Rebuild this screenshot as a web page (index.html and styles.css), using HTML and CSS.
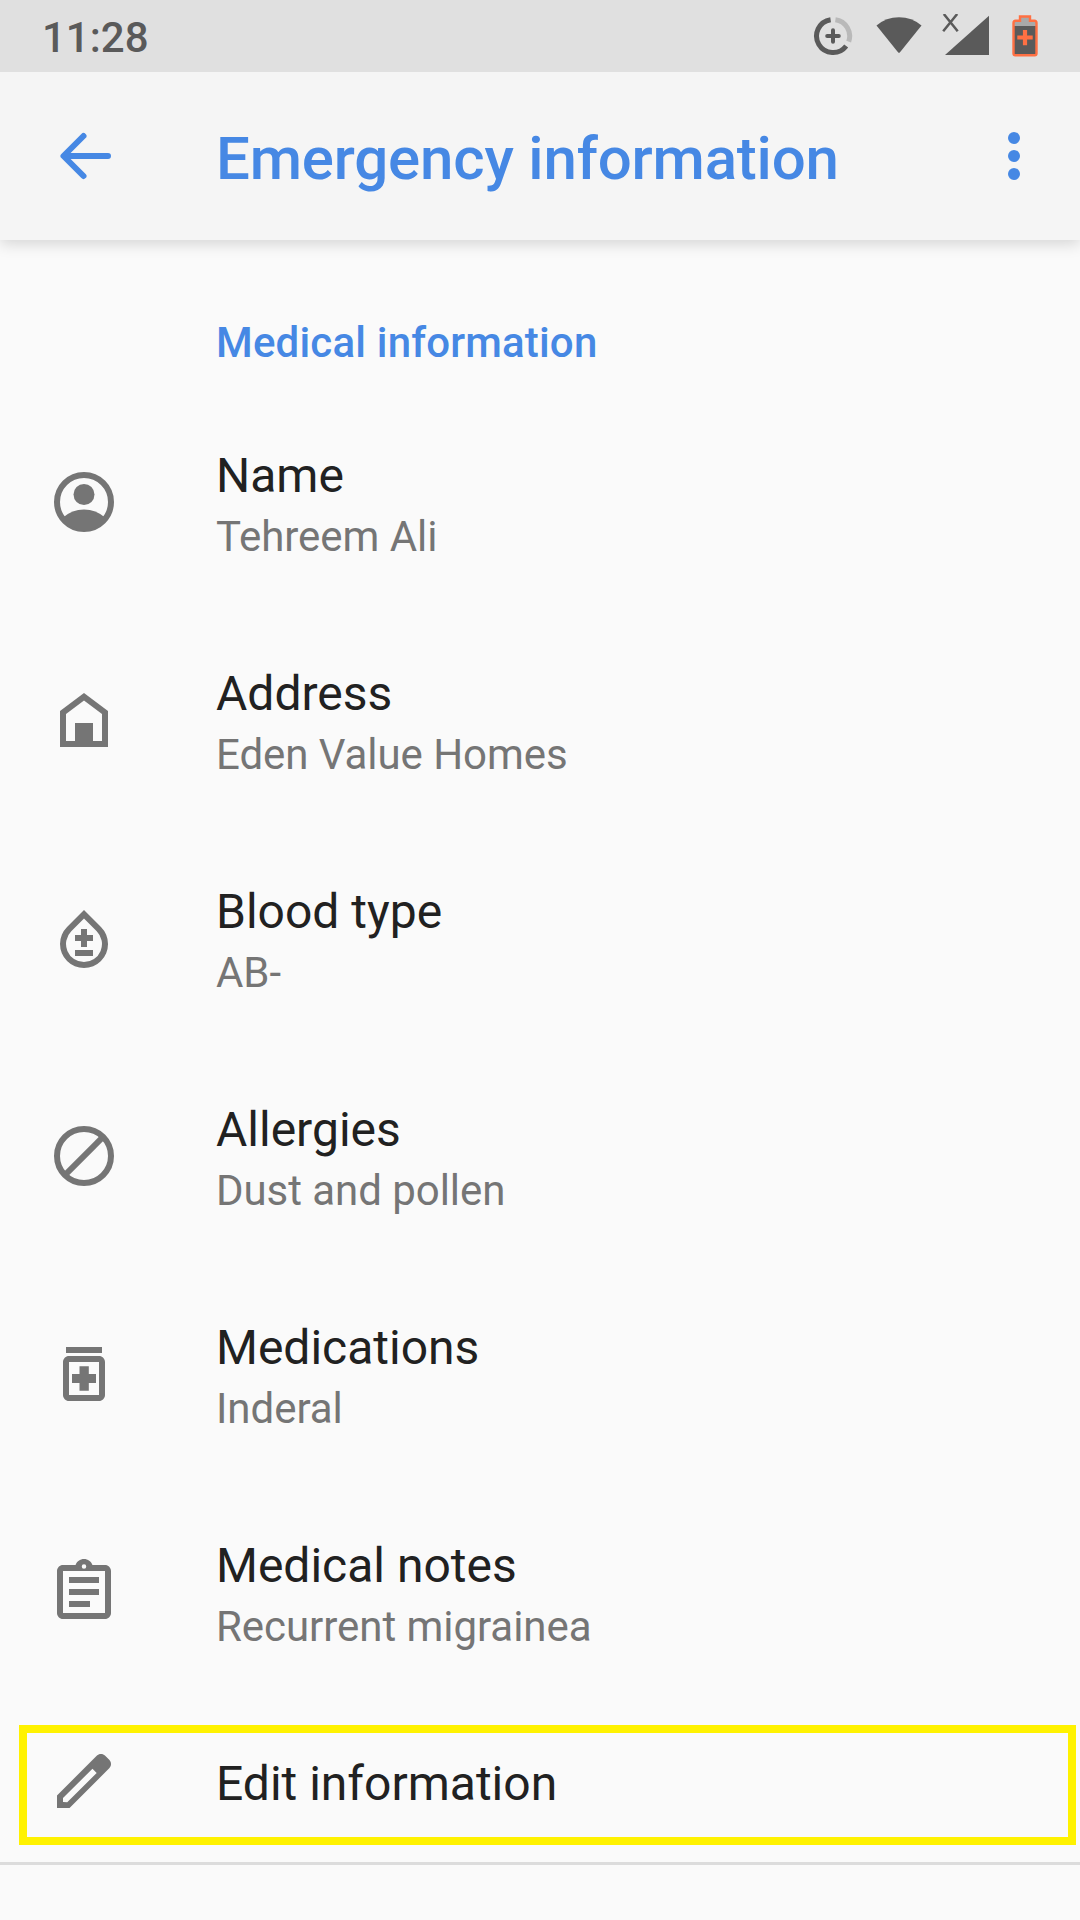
FILE: index.html
```html
<!DOCTYPE html>
<html lang="en">
<head>
    <meta charset="UTF-8">
    <meta name="viewport" content="width=device-width, initial-scale=1.0">
    <title>Emergency information</title>
    <link rel="stylesheet" href="styles.css">
</head>
<body>
    <div class="statusbar">
        <span class="time">11:28</span>
        <div class="status-icons">
            <svg class="data-saver" width="40" height="40" viewBox="0 0 40 40">
                <path d="M17.6 3.7A16.5 16.5 0 1 0 33.2 30" fill="none" stroke="#5a5a5a" stroke-width="5"/>
                <path d="M22.4 3.7A16.5 16.5 0 0 1 35.7 25.6" fill="none" stroke="#b9b9b9" stroke-width="5"/>
                <path d="M20 14.2V25.8M14.2 20H25.8" stroke="#5a5a5a" stroke-width="4" stroke-linecap="round"/>
            </svg>
            <svg class="wifi" width="46" height="37" viewBox="0 0 46 37">
                <path d="M0.5 8.5Q10 0.2 23 0.2T45.5 8.5L24 35.3Q23 36.4 22 35.3Z" fill="#5a5a5a"/>
            </svg>
            <svg class="signal" width="48" height="42" viewBox="0 0 48 42">
                <path d="M47 1.8V41H3Z" fill="#5a5a5a"/>
                <path d="M1.8 0L15.7 17.3M15.2 0L1.2 17.3" stroke="#5a5a5a" stroke-width="2.5"/>
            </svg>
            <svg class="battery" width="26" height="42" viewBox="0 0 26 42">
                <path d="M1.5 8V38.5Q1.5 40.3 3.3 40.3H22.7Q24.5 40.3 24.5 38.5V8Q24.5 5.8 22.5 5.8H18V1.5H8V5.8H3.5Q1.5 5.8 1.5 8Z" fill="#a9a9a9"/>
                <path d="M2 11H24V40H2Z" fill="#5a5a5a"/>
                <path d="M1.5 8V38.5Q1.5 40.3 3.3 40.3H22.7Q24.5 40.3 24.5 38.5V8Q24.5 5.8 22.5 5.8H18V1.5H8V5.8H3.5Q1.5 5.8 1.5 8Z" fill="none" stroke="#ff7043" stroke-width="2.4"/>
                <path d="M13 15V30.3M5.3 22.5H20.7" stroke="#ff7043" stroke-width="4.2"/>
            </svg>
        </div>
    </div>

    <div class="appbar">
        <svg class="back" width="72" height="72" viewBox="0 0 72 72">
            <path d="M35.5 16L15.5 36L35.5 56M16 36H60" fill="none" stroke="#4688e4" stroke-width="6" stroke-linecap="round" stroke-linejoin="round"/>
        </svg>
        <h1>Emergency information</h1>
        <svg class="more" width="12" height="48" viewBox="0 0 12 48" fill="#4688e4">
            <circle cx="6" cy="6" r="6"/>
            <circle cx="6" cy="24" r="6"/>
            <circle cx="6" cy="42" r="6"/>
        </svg>
    </div>

    <div class="container">
        <h2>Medical information</h2>

        <div class="row">
            <svg class="icon" viewBox="0 0 24 24">
                <circle cx="12" cy="12" r="9" fill="none" stroke="#757575" stroke-width="2"/>
                <circle cx="12" cy="9.5" r="3.5"/>
                <path d="M5 17.2Q8 14.5 12 14.5T19 17.2Q16.3 21.5 12 21.5T5 17.2Z"/>
            </svg>
            <div class="text">
                <p class="label">Name</p>
                <p class="value">Tehreem Ali</p>
            </div>
        </div>

        <div class="row">
            <svg class="icon" viewBox="0 0 24 24">
                <path fill-rule="evenodd" d="M12 3L20 9V21H4V9ZM12 5.5L6 10V19H9V13H15V19H18V10Z"/>
            </svg>
            <div class="text">
                <p class="label">Address</p>
                <p class="value">Eden Value Homes</p>
            </div>
        </div>

        <div class="row">
            <svg class="icon" viewBox="0 0 24 24">
                <path fill-rule="evenodd" d="M17.66 8.35L12 2.69L6.35 8.35A8 8 0 1 0 17.66 8.35ZM12 20A6 6 0 0 1 7.76 9.76L12 5.52L16.24 9.76A6 6 0 0 1 12 20Z"/>
                <path d="M11 9H13V11H15V13H13V15H11V13H9V11H11ZM9 16H15V18H9Z"/>
            </svg>
            <div class="text">
                <p class="label">Blood type</p>
                <p class="value">AB-</p>
            </div>
        </div>

        <div class="row">
            <svg class="icon" viewBox="0 0 24 24">
                <path d="M5.64 18.36L18.36 5.64" stroke="#757575" stroke-width="2"/>
                <circle cx="12" cy="12" r="9" fill="none" stroke="#757575" stroke-width="2"/>
            </svg>
            <div class="text">
                <p class="label">Allergies</p>
                <p class="value">Dust and pollen</p>
            </div>
        </div>

        <div class="row">
            <svg class="icon" viewBox="0 0 24 24">
                <path d="M6 3H18V5H6Z"/>
                <path fill-rule="evenodd" d="M17 6H7C5.9 6 5 6.9 5 8V19C5 20.1 5.9 21 7 21H17C18.1 21 19 20.1 19 19V8C19 6.9 18.1 6 17 6ZM17 19H7V8H17Z"/>
                <path d="M10.5 9.4H13.6V12H16V15H13.6V17.6H10.5V15H8V12H10.5Z"/>
            </svg>
            <div class="text">
                <p class="label">Medications</p>
                <p class="value">Inderal</p>
            </div>
        </div>

        <div class="row">
            <svg class="icon" viewBox="0 0 24 24">
                <path d="M7 15H14V17H7ZM7 11H17V13H7ZM7 7H17V9H7Z"/>
                <path fill-rule="evenodd" d="M19 3H14.82C14.4 1.84 13.3 1 12 1S9.6 1.84 9.18 3H5C3.9 3 3 3.9 3 5V19C3 20.1 3.9 21 5 21H19C20.1 21 21 20.1 21 19V5C21 3.9 20.1 3 19 3ZM12 2.75A.75 .75 0 1 1 12 4.25A.75 .75 0 1 1 12 2.75ZM19 19H5V5H19Z"/>
            </svg>
            <div class="text">
                <p class="label">Medical notes</p>
                <p class="value">Recurrent migrainea</p>
            </div>
        </div>

        <div class="row edit">
            <svg class="icon" viewBox="0 0 24 24">
                <path fill-rule="evenodd" d="M20.41 4.94L19.06 3.59C18.67 3.2 18.16 3 17.65 3S16.63 3.2 16.24 3.59L3 16.82V21H7.18L20.41 7.77C21.2 6.99 21.2 5.72 20.41 4.94ZM6.41 19.06L5 19V17.64L14.82 7.92L16.23 9.33Z"/>
            </svg>
            <div class="text">
                <p class="label">Edit information</p>
            </div>
        </div>
    </div>
</body>
</html>
```
FILE: styles.css
```css
body {
    font-family: Roboto, sans-serif;
    background-color: #fafafa;
    margin: 0;
    height: 1920px;
    overflow: hidden;
}
h1, h2, p {
    margin: 0;
    font-weight: 400;
    white-space: nowrap;
}
svg {
    display: block;
    flex-shrink: 0;
}
.statusbar {
    height: 72px;
    box-sizing: border-box;
    padding: 0 42px;
    background-color: #e0e0e0;
    display: flex;
    justify-content: space-between;
    align-items: center;
}
.time {
    font-size: 42px;
    font-weight: 500;
    line-height: 50px;
    color: #5a5a5a;
    padding-top: 3px;
}
.status-icons {
    display: flex;
    align-items: flex-start;
    height: 72px;
}
.data-saver {
    margin-top: 16px;
}
.wifi {
    margin: 17px 0 0 23px;
}
.signal {
    margin: 14px 0 0 20px;
}
.battery {
    margin: 15px 0 0 22px;
}
.appbar {
    height: 168px;
    box-sizing: border-box;
    padding: 0 60px 0 48px;
    background-color: #f5f5f5;
    box-shadow: 0 4px 14px rgba(0, 0, 0, 0.15);
    clip-path: inset(0 0 -30px 0);
    display: flex;
    align-items: center;
}
.appbar h1 {
    flex: 1;
    margin-left: 96px;
    padding-top: 5px;
    font-size: 60px;
    font-weight: 500;
    line-height: 71px;
    letter-spacing: -0.18px;
    color: #4688e4;
}
.container h2 {
    padding: 78px 0 25px 216px;
    font-size: 42px;
    font-weight: 500;
    line-height: 50px;
    letter-spacing: 0.18px;
    color: #4688e4;
}
.row {
    height: 218px;
    padding-left: 48px;
    display: flex;
    align-items: center;
}
.icon {
    width: 72px;
    height: 72px;
    fill: #757575;
}
.text {
    margin-left: 96px;
    padding-top: 9px;
}
.label {
    font-size: 48px;
    line-height: 60px;
    color: #212121;
}
.value {
    font-size: 42px;
    line-height: 62px;
    letter-spacing: -0.05px;
    color: #757575;
}
/* highlighted row with the list divider under it */
.edit {
    height: 120px;
    box-sizing: border-box;
    margin: 24px 4px 17px 19px;
    padding: 0 0 8px 21px;
    border: 8px solid #fff200;
}
.edit .text {
    padding-top: 5px;
}
.container {
    border-bottom: 3px solid #dcdcdc;
}
```
